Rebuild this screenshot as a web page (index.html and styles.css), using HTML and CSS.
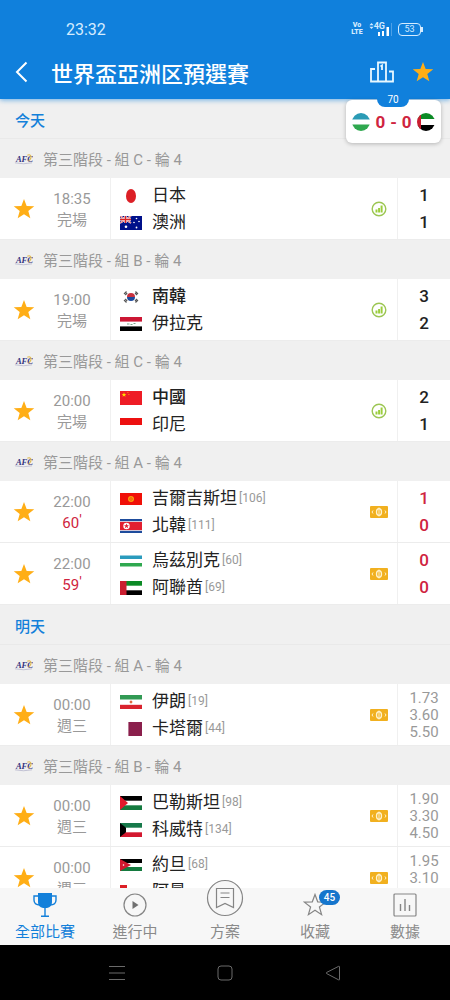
FILE: index.html
```html
<!DOCTYPE html>
<html lang="zh-Hant">

<head>
    <meta charset="UTF-8">
    <meta name="viewport" content="width=device-width, initial-scale=1.0">
    <title>世界盃亞洲区預選賽</title>
    <link rel="stylesheet" href="styles.css">
</head>

<body>
    <!-- 共用圖示與國旗 -->
    <svg class="sprite" aria-hidden="true">
        <symbol id="star" viewBox="0 0 24 24">
            <path d="M12 1l2.9 7.7 8.3.4-6.5 5.1 2.2 8L12 17.7 5.100 22.200l2.200-8L.8 9.100l8.300-.4z" />
        </symbol>
        <symbol id="afc" viewBox="0 0 20 12">
            <text x="2" y="9" class="afc-text">AFC</text>
            <path d="M14 2Q17.500 .5 18 4Q18 6.500 15.500 8" fill="none" stroke="#e0b84c" stroke-width="1.200" />
            <path d="M1 10Q10 12 19 10" fill="none" stroke="#a9a9c4" stroke-width=".7" />
        </symbol>
        <symbol id="stats" viewBox="0 0 16 16">
            <circle cx="8" cy="8" r="6.800" fill="none" stroke="#9cc653" stroke-width="1.400" />
            <path d="M4.500 8.500h2v3h-2zM7.100 7H9v4.500H7.100zM9.600 4.500h2v7h-2z" fill="#9bce3c" />
        </symbol>
        <symbol id="cash" viewBox="0 0 18 12">
            <rect width="18" height="12" rx="1" fill="#f1b01f" />
            <ellipse cx="9" cy="6" rx="2.500" ry="3.300" fill="none" stroke="#fff3cf" stroke-width="1.300" />
            <path d="M9 1.500v9M3 4.500L2 6l1 1.500M15 4.500L16 6l-1 1.500" fill="none" stroke="#fff3cf" />
        </symbol>

        <symbol id="jp" viewBox="0 0 22 14">
            <ellipse cx="11" cy="7" rx="5" ry="7" fill="#dc1f26" />
        </symbol>
        <symbol id="au" viewBox="0 0 22 14">
            <path fill="#00108a" d="M0 0h22v14H0z" />
            <path d="M0 0l11 7M11 0L0 7" stroke="#fff" stroke-width="1.800" />
            <path d="M0 0l11 7M11 0L0 7" stroke="#d22" stroke-width=".7" />
            <path d="M5.500 0v7M0 3.500h11" stroke="#fff" stroke-width="2.400" />
            <path d="M5.500 0v7M0 3.500h11" stroke="#d22" stroke-width="1.400" />
            <g fill="#fff">
                <circle cx="6" cy="10.800" r="1.300" />
                <circle cx="16.500" cy="2.500" r=".8" />
                <circle cx="14" cy="6.500" r=".8" />
                <circle cx="19" cy="5.500" r=".8" />
                <circle cx="16.500" cy="11.500" r=".9" />
            </g>
        </symbol>
        <symbol id="kr" viewBox="0 0 22 14">
            <path d="M7 7a4 4 0 0 1 8 0z" fill="#c8313e" />
            <path d="M7 7a4 4 0 0 0 8 0z" fill="#1d4a9c" />
            <path d="M4 4l2.500-2.500M5.200 5l2-2M15.500 1.500L18 4M15 3l2 2M4 10l2.500 2.500M5.200 9l2 2M18 10l-2.500 2.500M17 9l-2 2" stroke="#555" stroke-width="1.100" />
        </symbol>
        <symbol id="iq" viewBox="0 0 22 14">
            <path fill="#fff" d="M0 0h22v14H0z" />
            <path fill="#cc1734" d="M0 0h22v4.600H0z" />
            <path fill="#000" d="M0 9.400h22V14H0z" />
            <path d="M7 7h2.500M10.500 7.500h2M13.500 6.500h2" stroke="#7aa68b" />
        </symbol>
        <symbol id="cn" viewBox="0 0 22 14">
            <path fill="#ee1c25" d="M0 0h22v14H0z" />
            <path fill="#fd0" d="M4 1.200l.6 1.700h1.800L5 4l.5 1.800L4 4.700 2.500 5.800 3 4 1.600 2.900h1.800z" />
            <path fill="#fd0" d="M7.500 1h.8v.8h-.8zM8.500 3h.8v.8h-.8z" />
        </symbol>
        <symbol id="id" viewBox="0 0 22 14">
            <path fill="#fff" d="M0 0h22v14H0z" />
            <path fill="#ed1010" d="M0 0h22v7H0z" />
        </symbol>
        <symbol id="kg" viewBox="0 0 22 14">
            <path fill="#f01008" d="M0 1h22v12H0z" />
            <circle cx="11" cy="7" r="3" fill="#fb9d0c" />
            <circle cx="11" cy="7" r="1.300" fill="none" stroke="#e8410c" stroke-width=".7" />
        </symbol>
        <symbol id="kp" viewBox="0 0 22 14">
            <path fill="#1e4c9c" d="M0 0h22v14H0z" />
            <path fill="#fff" d="M0 2.200h22v9.600H0z" />
            <path fill="#e21f30" d="M0 2.900h22v8.200H0z" />
            <circle cx="6.500" cy="7" r="3.200" fill="#fff" />
            <path fill="#e21f30" d="M6.500 4.400l.7 1.800h1.900L7.600 7.300l.5 1.900-1.600-1.100-1.600 1.100.5-1.900-1.500-1.100h1.900z" />
        </symbol>
        <symbol id="uz" viewBox="0 0 22 14">
            <path fill="#fff" d="M0 1h22v12H0z" />
            <path fill="#2b9bbd" d="M0 1.500h22v3.500H0z" />
            <path fill="#2fa84f" d="M0 9h22v3.500H0z" />
        </symbol>
        <symbol id="ae" viewBox="0 0 22 14">
            <path fill="#fff" d="M0 0h22v14H0z" />
            <path fill="#0b8a25" d="M0 0h22v4.700H0z" />
            <path fill="#000" d="M0 9.300h22V14H0z" />
            <path fill="#ca1e30" d="M0 0h6.500v14H0z" />
        </symbol>
        <symbol id="ir" viewBox="0 0 22 14">
            <path fill="#fff" d="M0 0h22v14H0z" />
            <path fill="#319a54" d="M0 0h22v4.500H0z" />
            <path fill="#d9232e" d="M0 9.800h22V14H0z" />
            <path fill="#e0643c" d="M11 5.300l1.700 1.700L11 8.700 9.300 7z" />
        </symbol>
        <symbol id="qa" viewBox="0 0 22 14">
            <path fill="#8a1f4c" d="M8 0h14v14H8l.8-1-.8-1 .8-1-.8-1 .8-1L8 8l.8-1L8 6l.8-1L8 4l.8-1L8 2l.8-1z" />
        </symbol>
        <symbol id="ps" viewBox="0 0 22 14">
            <path fill="#fff" d="M0 0h22v14H0z" />
            <path fill="#000" d="M0 0h22v4.700H0z" />
            <path fill="#147a3f" d="M0 9.300h22V14H0z" />
            <path fill="#e0192d" d="M0 0l8 7-8 7z" />
        </symbol>
        <symbol id="kw" viewBox="0 0 22 14">
            <path fill="#fff" d="M0 0h22v14H0z" />
            <path fill="#16794a" d="M0 0h22v4.700H0z" />
            <path fill="#d3182f" d="M0 9.300h22V14H0z" />
            <path fill="#000" d="M0 0l6 4.700v4.600L0 14z" />
        </symbol>
        <symbol id="jo" viewBox="0 0 22 14">
            <path fill="#fff" d="M0 1h22v12H0z" />
            <path fill="#000" d="M0 1h22v4H0z" />
            <path fill="#147a3f" d="M0 9h22v4H0z" />
            <path fill="#d3182f" d="M0 1l11 6-11 6z" />
            <circle cx="3.500" cy="7" r=".8" fill="#fff" />
        </symbol>
        <symbol id="om" viewBox="0 0 22 14">
            <path fill="#fff" d="M0 0h22v4.700H0z" />
            <path fill="#dc1f26" d="M0 0h7v14H0zM7 4.700h15v4.600H7z" />
            <path fill="#128a2a" d="M7 9.300h15V14H7z" />
        </symbol>
    </svg>

    <div class="app">
        <header class="header">
            <div class="status-bar">
                <span class="clock">23:32</span>
                <div class="status-icons">
                    <span class="volte"><span>Vo</span><span>LTE</span></span>
                    <span class="signal">
                        <svg width="5" height="8" viewBox="0 0 6 8"><path d="M.5 3L3 .5 5.500 3zM.5 5L3 7.500 5.500 5z" fill="#d5ecff" /></svg>
                        <span class="net">4G</span>
                        <svg class="bars" width="14" height="14" viewBox="0 0 14 14"><path d="M0 10h2v4H0zM4 9h2v5H4zM8.500 5H11v9H8.500z" fill="#fff" /><path d="M13 1h1v13h-1z" fill="#4da0e6" /></svg>
                    </span>
                    <span class="battery">53</span>
                </div>
            </div>
            <div class="title-bar">
                <button class="icon-btn" type="button" aria-label="返回">
                    <svg width="14" height="22" viewBox="0 0 14 22"><path d="M11.500 1.500L2 11l9.500 9.500" fill="none" stroke="#fff" stroke-width="2" /></svg>
                </button>
                <h1>世界盃亞洲区預選賽</h1>
                <button class="icon-btn" type="button" aria-label="排名">
                    <svg width="24" height="22" viewBox="0 0 24 22"><path d="M5 8H1v12.500h22V10.500h-4M8 20V1.500h8V20M10.500 5.500l1.500-1V9" fill="none" stroke="#e8f8ff" stroke-width="1.800" /></svg>
                </button>
                <button class="icon-btn" type="button" aria-label="收藏賽事">
                    <svg class="star" width="22" height="22"><use href="#star" /></svg>
                </button>
            </div>
            <a class="live-card" href="#live">
                <span class="live-minute">70</span>
                <svg class="round-flag" viewBox="0 0 18 18"><path fill="#fff" d="M0 0h18v18H0z" /><path fill="#2b9bb5" d="M0 0h18v6.500H0z" /><path fill="#2fa84f" d="M0 11.500h18V18H0z" /></svg>
                <span class="live-score"><span>0</span><span>-</span><span>0</span></span>
                <svg class="round-flag" viewBox="0 0 18 18"><path fill="#fff" d="M0 0h18v18H0z" /><path fill="#0b8a25" d="M0 0h18v6H0z" /><path fill="#000" d="M0 12h18v6H0z" /><path fill="#ca1e30" d="M0 0h4v18H0z" /></svg>
            </a>
        </header>

        <main class="match-list">
            <h2 class="day">今天</h2>

            <h3 class="league"><svg class="afc"><use href="#afc" /></svg>第三階段 - 組 C - 輪 4</h3>
            <article class="match">
                <button class="fav" type="button" aria-label="收藏"><svg class="star"><use href="#star" /></svg></button>
                <div class="time"><span>18:35</span><span>完場</span></div>
                <div class="teams">
                    <div class="team"><svg class="flag"><use href="#jp" /></svg>日本</div>
                    <div class="team"><svg class="flag"><use href="#au" /></svg>澳洲</div>
                </div>
                <svg class="stats"><use href="#stats" /></svg>
                <div class="score"><span>1</span><span>1</span></div>
            </article>

            <h3 class="league"><svg class="afc"><use href="#afc" /></svg>第三階段 - 組 B - 輪 4</h3>
            <article class="match">
                <button class="fav" type="button" aria-label="收藏"><svg class="star"><use href="#star" /></svg></button>
                <div class="time"><span>19:00</span><span>完場</span></div>
                <div class="teams">
                    <div class="team winner"><svg class="flag"><use href="#kr" /></svg>南韓</div>
                    <div class="team"><svg class="flag"><use href="#iq" /></svg>伊拉克</div>
                </div>
                <svg class="stats"><use href="#stats" /></svg>
                <div class="score"><span>3</span><span>2</span></div>
            </article>

            <h3 class="league"><svg class="afc"><use href="#afc" /></svg>第三階段 - 組 C - 輪 4</h3>
            <article class="match">
                <button class="fav" type="button" aria-label="收藏"><svg class="star"><use href="#star" /></svg></button>
                <div class="time"><span>20:00</span><span>完場</span></div>
                <div class="teams">
                    <div class="team winner"><svg class="flag"><use href="#cn" /></svg>中國</div>
                    <div class="team"><svg class="flag"><use href="#id" /></svg>印尼</div>
                </div>
                <svg class="stats"><use href="#stats" /></svg>
                <div class="score"><span>2</span><span>1</span></div>
            </article>

            <h3 class="league"><svg class="afc"><use href="#afc" /></svg>第三階段 - 組 A - 輪 4</h3>
            <article class="match live">
                <button class="fav" type="button" aria-label="收藏"><svg class="star"><use href="#star" /></svg></button>
                <div class="time"><span>22:00</span><span class="minute">60<sup>'</sup></span></div>
                <div class="teams">
                    <div class="team"><svg class="flag"><use href="#kg" /></svg>吉爾吉斯坦<small>[106]</small></div>
                    <div class="team"><svg class="flag"><use href="#kp" /></svg>北韓<small>[111]</small></div>
                </div>
                <svg class="cash"><use href="#cash" /></svg>
                <div class="score"><span>1</span><span>0</span></div>
            </article>
            <article class="match live">
                <button class="fav" type="button" aria-label="收藏"><svg class="star"><use href="#star" /></svg></button>
                <div class="time"><span>22:00</span><span class="minute">59<sup>'</sup></span></div>
                <div class="teams">
                    <div class="team"><svg class="flag"><use href="#uz" /></svg>烏茲別克<small>[60]</small></div>
                    <div class="team"><svg class="flag"><use href="#ae" /></svg>阿聯酋<small>[69]</small></div>
                </div>
                <svg class="cash"><use href="#cash" /></svg>
                <div class="score"><span>0</span><span>0</span></div>
            </article>

            <h2 class="day">明天</h2>

            <h3 class="league"><svg class="afc"><use href="#afc" /></svg>第三階段 - 組 A - 輪 4</h3>
            <article class="match">
                <button class="fav" type="button" aria-label="收藏"><svg class="star"><use href="#star" /></svg></button>
                <div class="time"><span>00:00</span><span>週三</span></div>
                <div class="teams">
                    <div class="team"><svg class="flag"><use href="#ir" /></svg>伊朗<small>[19]</small></div>
                    <div class="team"><svg class="flag"><use href="#qa" /></svg>卡塔爾<small>[44]</small></div>
                </div>
                <svg class="cash"><use href="#cash" /></svg>
                <div class="odds"><span>1.73</span><span>3.60</span><span>5.50</span></div>
            </article>

            <h3 class="league"><svg class="afc"><use href="#afc" /></svg>第三階段 - 組 B - 輪 4</h3>
            <article class="match">
                <button class="fav" type="button" aria-label="收藏"><svg class="star"><use href="#star" /></svg></button>
                <div class="time"><span>00:00</span><span>週三</span></div>
                <div class="teams">
                    <div class="team"><svg class="flag"><use href="#ps" /></svg>巴勒斯坦<small>[98]</small></div>
                    <div class="team"><svg class="flag"><use href="#kw" /></svg>科威特<small>[134]</small></div>
                </div>
                <svg class="cash"><use href="#cash" /></svg>
                <div class="odds"><span>1.90</span><span>3.30</span><span>4.50</span></div>
            </article>
            <article class="match">
                <button class="fav" type="button" aria-label="收藏"><svg class="star"><use href="#star" /></svg></button>
                <div class="time"><span>00:00</span><span>週三</span></div>
                <div class="teams">
                    <div class="team"><svg class="flag"><use href="#jo" /></svg>約旦<small>[68]</small></div>
                    <div class="team"><svg class="flag"><use href="#om" /></svg>阿曼</div>
                </div>
                <svg class="cash"><use href="#cash" /></svg>
                <div class="odds"><span>1.95</span><span>3.10</span></div>
            </article>
        </main>

        <nav class="tab-bar">
            <a class="tab active" href="#all">
                <svg width="24" height="24" viewBox="0 0 24 24"><path d="M5 0h14v9q0 5-5 6h-4q-5-1-5-6z" fill="#1380da" /><path d="M5 3H1v4q0 5 6 5M19 3h4v4q0 5-6 5M12 15v8M8 23.300h8" fill="none" stroke="#1380da" stroke-width="1.400" /></svg>
                <span>全部比賽</span>
            </a>
            <a class="tab" href="#live">
                <svg width="24" height="24" viewBox="0 0 24 24"><circle cx="12" cy="12" r="11" fill="none" stroke="#858585" stroke-width="1.200" /><path d="M9.500 8l6 4-6 4z" fill="#707070" /></svg>
                <span>進行中</span>
            </a>
            <a class="tab" href="#plan">
                <svg width="38" height="38" viewBox="0 0 38 38"><circle cx="19" cy="19" r="17.500" fill="#f7f7f7" stroke="#858585" stroke-width="1.200" /><path d="M10.500 9.500h17v19L19 24.500l-8.500 4zM14.500 14h9M14.500 18.500h9" fill="none" stroke="#858585" stroke-width="1.200" /></svg>
                <span>方案</span>
            </a>
            <a class="tab" href="#favorites">
                <svg width="24" height="24" viewBox="0 0 24 24"><path d="M12 1.500l2.700 7.300 8 .3-6.300 4.900 2.200 7.700L12 17.300l-6.600 4.400L7.600 14 1.300 9.100l8-.3z" fill="none" stroke="#858585" stroke-width="1.200" /></svg>
                <span>收藏</span>
                <b class="badge">45</b>
            </a>
            <a class="tab" href="#data">
                <svg width="24" height="24" viewBox="0 0 24 24"><rect x="1" y="1" width="22" height="22" rx="1" fill="none" stroke="#858585" stroke-width="1.200" /><path d="M7.500 11v7M12 6v12M16.500 12v6" stroke="#858585" stroke-width="1.400" /></svg>
                <span>數據</span>
            </a>
        </nav>

        <div class="system-nav">
            <button type="button" aria-label="選單"><svg width="16" height="16" viewBox="0 0 16 16"><path d="M0 1.500h16M0 8h16M0 14.500h16" stroke="#6a6a6a" /></svg></button>
            <button type="button" aria-label="主畫面"><svg width="16" height="16" viewBox="0 0 16 16"><rect x="1" y="1" width="14" height="14" rx="3" fill="none" stroke="#6a6a6a" /></svg></button>
            <button type="button" aria-label="上一頁"><svg width="16" height="16" viewBox="0 0 16 16"><path d="M14.500 2v12.500q0 .8-.8.4L1.500 8.500q-.5-.5 0-1L13.700 1.300q.8-.3.8.7z" fill="none" stroke="#6a6a6a" /></svg></button>
        </div>
    </div>
</body>

</html>
```
FILE: styles.css
```css
* {
    box-sizing: border-box;
}

body {
    margin: 0;
    font-family: Roboto, "Noto Sans CJK TC", sans-serif;
    font-size: 15px;
    color: #222;
    background-color: #fff;
}

button {
    display: flex;
    align-items: center;
    justify-content: center;
    padding: 0;
    border: none;
    background: none;
    cursor: pointer;
}

a {
    color: inherit;
    text-decoration: none;
}

svg {
    display: block;
    flex: none;
}

.sprite {
    position: absolute;
    width: 0;
    height: 0;
}

.app {
    display: flex;
    flex-direction: column;
    height: 100vh;
}

/* 頂部 */
.header {
    position: relative;
    z-index: 1;
    flex: none;
    padding-top: 16px;
    background-color: #1080dc;
    box-shadow: 0 1px 5px rgba(16, 128, 220, 0.6);
    color: #fff;
}

.status-bar {
    display: flex;
    align-items: center;
    justify-content: space-between;
    height: 26px;
    padding: 0 29px 0 66px;
    color: #d5ecff;
}

.clock {
    font-size: 16px;
}

.status-icons {
    display: flex;
    align-items: center;
    gap: 6px;
}

.volte {
    display: flex;
    flex-direction: column;
    font-size: 7px;
    font-weight: 900;
    line-height: 7px;
    text-align: center;
}

.signal {
    display: flex;
    align-items: flex-start;
}

.net {
    font-size: 9px;
    font-weight: 700;
    line-height: 8px;
}

.signal .bars {
    margin-left: -7px;
}

.battery {
    position: relative;
    width: 23px;
    height: 13px;
    border: 1px solid #d5ecff;
    border-radius: 4px;
    font-size: 9px;
    line-height: 11px;
    text-align: center;
}

.battery::after {
    content: "";
    position: absolute;
    top: 3px;
    right: -3px;
    width: 2px;
    height: 5px;
    background-color: #d5ecff;
}

.title-bar {
    display: flex;
    align-items: center;
    height: 57px;
    padding: 2px 16px 0 15px;
    gap: 18px;
}

.title-bar h1 {
    flex: 1;
    margin: 0 0 0 4px;
    font-size: 22px;
    font-weight: 500;
    white-space: nowrap;
}

.star {
    width: 22px;
    height: 22px;
    fill: #ffae16;
}

.live-card {
    position: absolute;
    top: 100px;
    right: 9px;
    display: flex;
    align-items: center;
    justify-content: space-between;
    width: 95px;
    height: 43px;
    padding: 0 6px;
    border-radius: 6px;
    background-color: #fff;
    box-shadow: 0 1px 4px rgba(0, 0, 0, 0.25);
}

.live-minute {
    position: absolute;
    top: -6px;
    left: 31px;
    width: 32px;
    height: 13px;
    border-radius: 0 0 8px 8px;
    background-color: #1080dc;
    font-size: 10px;
    line-height: 12px;
    text-align: center;
}

.live-score {
    display: flex;
    gap: 5px;
    color: #cf2440;
    font-size: 17px;
    font-weight: 700;
}

.round-flag {
    width: 18px;
    height: 18px;
    border-radius: 50%;
}

/* 賽事列表 */
.match-list {
    flex: 1;
    min-height: 0;
    overflow: hidden;
}

.day,
.league {
    display: flex;
    align-items: center;
    margin: 0;
    background-color: #f0f0f0;
    font-size: 15px;
}

.day {
    height: 40px;
    padding: 2px 15px 0;
    border-bottom: 1px solid #e9e9e9;
    color: #1380da;
    font-weight: 500;
}

.league {
    height: 39px;
    padding: 0 14px;
    gap: 10px;
    color: #999;
    font-weight: 400;
}

.afc {
    width: 19px;
    height: 12px;
}

.afc-text {
    fill: #34337f;
    font-family: "Liberation Serif", serif;
    font-size: 9px;
    font-style: italic;
    font-weight: 700;
}

.match {
    display: grid;
    grid-template-columns: 48px 48px 1fr 36px 53px;
    align-items: center;
    height: 62px;
    border-bottom: 1px solid #ececec;
}

.fav {
    height: 100%;
}

.time,
.score,
.odds {
    display: flex;
    flex-direction: column;
    align-items: center;
    justify-content: center;
}

.time {
    padding-top: 2px;
    color: #999;
    line-height: 21px;
}

.minute {
    color: #cf2440;
}

.minute sup {
    font-size: 15px;
    line-height: 0;
    vertical-align: 3px;
}

.teams,
.score,
.odds {
    height: 100%;
    border-left: 1px solid #f0f0f0;
}

.teams {
    display: flex;
    flex-direction: column;
    justify-content: center;
    margin-left: 14px;
    padding: 1px 0 0 9px;
}

.team {
    display: flex;
    align-items: center;
    font-size: 17px;
    line-height: 27px;
    white-space: nowrap;
}

.winner {
    font-weight: 500;
}

.flag {
    width: 22px;
    height: 14px;
    margin-right: 10px;
}

.team small {
    margin-left: 2px;
    color: #999;
    font-size: 12px;
}

.stats {
    width: 16px;
    height: 16px;
    justify-self: center;
}

.cash {
    width: 18px;
    height: 12px;
    justify-self: center;
}

.score {
    padding-top: 1px;
    font-size: 17px;
    font-weight: 500;
    line-height: 27px;
}

.live .score {
    color: #cf2440;
}

.odds {
    justify-content: flex-start;
    padding-top: 6px;
    color: #999;
    line-height: 17px;
}

/* 底部分頁 */
.tab-bar {
    position: relative;
    z-index: 1;
    display: flex;
    flex: none;
    height: 57px;
    background-color: #f7f7f7;
}

.tab {
    position: relative;
    display: flex;
    flex: 1;
    flex-direction: column;
    align-items: center;
    justify-content: flex-end;
    gap: 5px;
    padding-bottom: 3px;
    color: #8a8a8a;
    line-height: 20px;
}

.tab.active {
    color: #1380da;
}

.badge {
    position: absolute;
    top: 2px;
    left: calc(50% + 4px);
    width: 21px;
    height: 15px;
    border-radius: 8px;
    background-color: #1575cc;
    color: #fff;
    font-size: 10px;
    font-weight: 500;
    line-height: 15px;
    text-align: center;
}

.system-nav {
    display: flex;
    flex: none;
    justify-content: center;
    gap: 92px;
    height: 55px;
    background-color: #000;
}
```
